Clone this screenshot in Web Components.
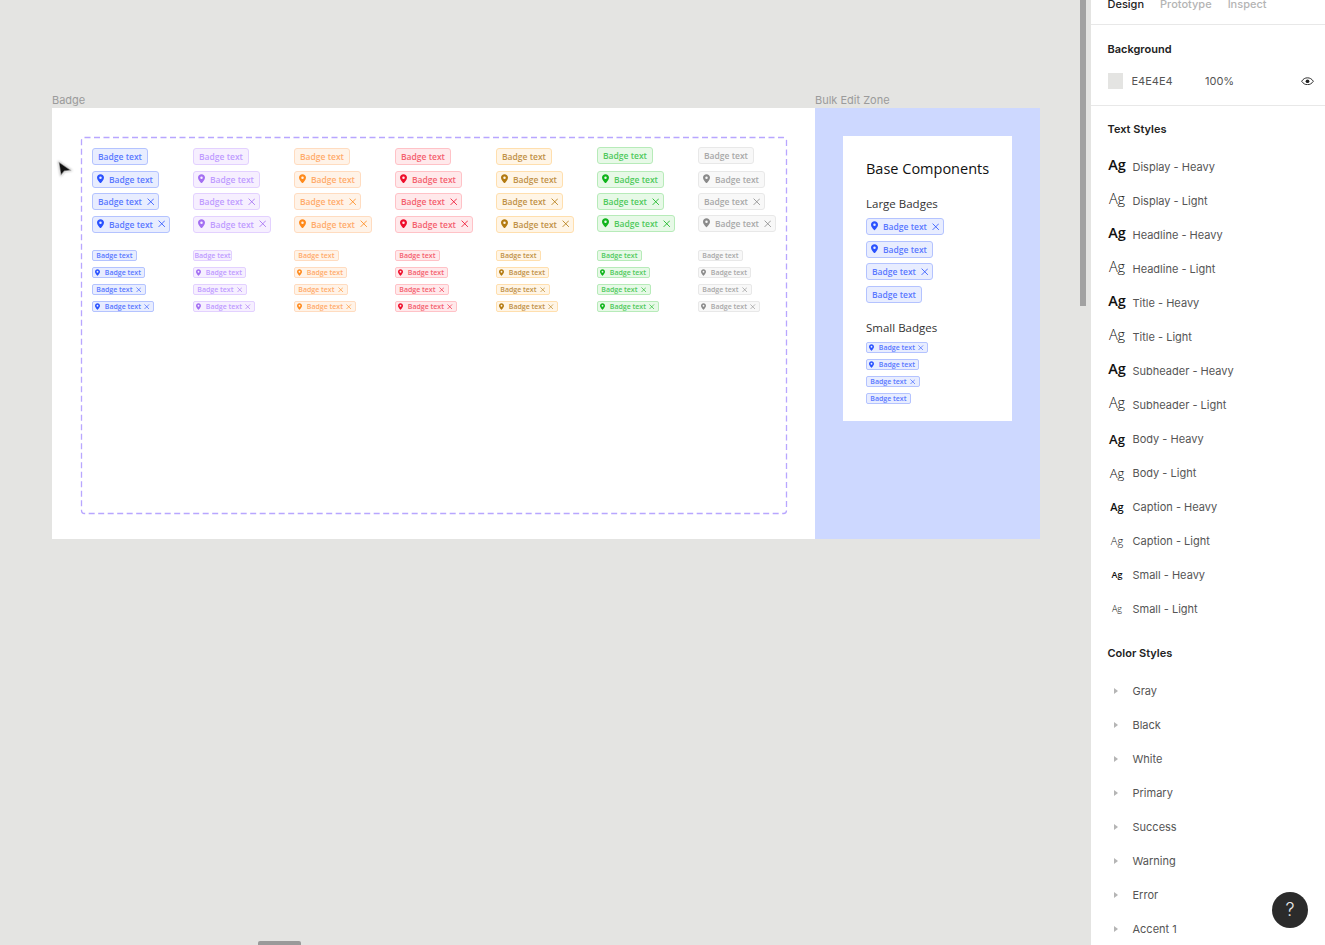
<!DOCTYPE html>
<html lang="en">
<head>
<meta charset="utf-8">
<title>Badge</title>
<style>
html,body{margin:0;padding:0;height:100%;overflow:hidden;background:#e4e4e2;font-family:Inter,"Liberation Sans",sans-serif}
</style>
</head>
<body>
<x-editor>
  <x-frame label="Badge" width="763" tone="white">
    <x-component-set></x-component-set>
  </x-frame>
  <x-frame label="Bulk Edit Zone" width="225" tone="blue">
    <x-base-card></x-base-card>
  </x-frame>
  <x-panel slot="panel"></x-panel>
</x-editor>
<script>
const TONES={
  blue:{bg:'#e8edff',bd:'#b4c3ff',tx:'#5a78ff',ic:'#2a52ff'},
  purple:{bg:'#f6efff',bd:'#e3d1ff',tx:'#c09cff',ic:'#a36ef2'},
  orange:{bg:'#fff3e8',bd:'#ffdcc0',tx:'#ffab6b',ic:'#ff8a1c'},
  red:{bg:'#ffe9eb',bd:'#ffc2c7',tx:'#f4606e',ic:'#ee0f2c'},
  yellow:{bg:'#fff5e6',bd:'#ffdfae',tx:'#bf9146',ic:'#b37a10'},
  green:{bg:'#e7f9e7',bd:'#b7ebb9',tx:'#4fc95c',ic:'#10b41c'},
  gray:{bg:'#f8f8f8',bd:'#e8e8e8',tx:'#a8a8a8',ic:'#8a8a8a'}
};
const PIN='<svg class="pin" viewBox="0 0 10 13" aria-hidden="true"><path fill="currentColor" fill-rule="evenodd" d="M5 0C2.2 0 0 2.2 0 4.9 0 8.300 5 13 5 13s5-4.700 5-8.100C10 2.200 7.800 0 5 0zm0 3.200a1.800 1.800 0 1 1 0 3.600 1.800 1.800 0 0 1 0-3.600z"/></svg>';
const CROSS='<svg class="cross" viewBox="0 0 10 10" aria-hidden="true"><path fill="none" stroke="currentColor" stroke-width="1.100" d="M.8.8l8.400 8.400M9.200.8L.8 9.200"/></svg>';

class XBadge extends HTMLElement{
  connectedCallback(){
    if(this.shadowRoot)return;
    const t=TONES[this.getAttribute('tone')||'blue'];
    const r=this.attachShadow({mode:'open'});
    r.innerHTML=`<style>
      :host{display:inline-flex;box-sizing:border-box;align-items:center;height:17px;padding:0 5px;border:1px solid ${t.bd};border-radius:3px;background:${t.bg};color:${t.tx};font:600 8.500px/15px "Open Sans","Noto Sans",sans-serif;white-space:nowrap;flex:none}
      :host([leading]){padding-left:3.700px}
      :host([trailing]){padding-right:3.500px}
      :host([up]){margin-top:-.7px;margin-bottom:.7px}
      .pin{width:7px;height:9.500px;margin:0 5.300px 1px 0;color:${t.ic};flex:none}
      .cross{width:7.500px;height:7.500px;margin-left:5px;color:${t.ic};flex:none}
      :host([size=small]){height:11px;padding:0 3.300px;border-radius:2px;font-size:7px;line-height:9px}
      :host([size=small][leading]){padding-left:1.800px}
      :host([size=small][trailing]){padding-right:3.500px}
      :host([size=small][tight]){padding:0 .4px}
      :host([size=small]) .pin{width:5px;height:7px;margin:0 5px 1px 0}
      :host([size=small]) .cross{width:5.500px;height:5.500px;margin-left:3.200px}
    </style>${this.hasAttribute('leading')?PIN:''}<slot></slot>${this.hasAttribute('trailing')?CROSS:''}`;
  }
}
customElements.define('x-badge',XBadge);

class XToneColumn extends HTMLElement{
  connectedCallback(){
    if(this.shadowRoot)return;
    const tone=this.getAttribute('tone');
    const up=this.hasAttribute('shift');
    const tight=this.hasAttribute('tight');
    const large=[['',up],['leading',false],['trailing',false],['leading trailing',up]];
    const small=['','leading','trailing','leading trailing'];
    const r=this.attachShadow({mode:'open'});
    r.innerHTML=`<style>
      :host{display:flex;flex-direction:column;align-items:flex-start;gap:17.500px}
      .g{display:flex;flex-direction:column;align-items:flex-start}
      .l{gap:5.500px}.s{gap:6px}
    </style>
    <div class="g l">${large.map(([a,u])=>`<x-badge tone="${tone}" ${a} ${u?'up':''}>Badge text</x-badge>`).join('')}</div>
    <div class="g s">${small.map((a,i)=>`<x-badge tone="${tone}" size="small" ${a} ${tight&&i===0?'tight':''}>Badge text</x-badge>`).join('')}</div>`;
  }
}
customElements.define('x-tone-column',XToneColumn);

class XComponentSet extends HTMLElement{
  constructor(){
    super();
    const r=this.attachShadow({mode:'open'});
    r.innerHTML=`<style>
      :host{display:grid;position:relative;grid-template-columns:repeat(7,101px);align-content:start;box-sizing:border-box;margin:29px 28px 25px 29px;height:377px;padding:11px 0 0 11px}
      svg{position:absolute;left:0;top:0;width:706px;height:377px;overflow:visible;pointer-events:none}
    </style>
    <svg viewBox="0 0 706 377" aria-hidden="true"><rect x=".5" y=".5" width="705" height="376" rx="3" fill="none" stroke="#b8a6ff" stroke-width="1.300" stroke-dasharray="6 3.500"/></svg>
    <x-tone-column tone="blue"></x-tone-column>
    <x-tone-column tone="purple" tight></x-tone-column>
    <x-tone-column tone="orange"></x-tone-column>
    <x-tone-column tone="red"></x-tone-column>
    <x-tone-column tone="yellow"></x-tone-column>
    <x-tone-column tone="green" shift></x-tone-column>
    <x-tone-column tone="gray" shift></x-tone-column>`;
  }
}
customElements.define('x-component-set',XComponentSet);

class XBaseCard extends HTMLElement{
  constructor(){
    super();
    const r=this.attachShadow({mode:'open'});
    r.innerHTML=`<style>
      :host{display:flex;flex-direction:column;align-items:flex-start;box-sizing:border-box;width:169px;height:285px;margin:28px 0 0 28px;padding:23px 0 0 23px;background:#fff;font-family:"Open Sans","Noto Sans",sans-serif}
      h2{margin:0 0 16.500px;font:500 14.500px/20px "Open Sans","Noto Sans",sans-serif;color:#111}
      h3{margin:0 0 6.500px;font:400 11.500px/16px "Open Sans","Noto Sans",sans-serif;color:#333}
      .g{display:flex;flex-direction:column;align-items:flex-start}
      .l{gap:5.500px;margin-bottom:17.500px}.s{gap:6px;margin-top:-.5px}
    </style>
    <h2>Base Components</h2>
    <h3>Large Badges</h3>
    <div class="g l">
      <x-badge leading trailing>Badge text</x-badge>
      <x-badge leading>Badge text</x-badge>
      <x-badge trailing>Badge text</x-badge>
      <x-badge>Badge text</x-badge>
    </div>
    <h3>Small Badges</h3>
    <div class="g s">
      <x-badge size="small" leading trailing>Badge text</x-badge>
      <x-badge size="small" leading>Badge text</x-badge>
      <x-badge size="small" trailing>Badge text</x-badge>
      <x-badge size="small">Badge text</x-badge>
    </div>`;
  }
}
customElements.define('x-base-card',XBaseCard);

class XFrame extends HTMLElement{
  constructor(){
    super();
    const r=this.attachShadow({mode:'open'});
    r.innerHTML=`<style>
      :host{display:block;flex:none}
      .label{height:16px;font:400 11px/16px Inter,sans-serif;color:#9b9b9b;white-space:nowrap}
      .body{display:flow-root;height:431px;overflow:hidden}
    </style><div class="label"></div><div class="body"><slot></slot></div>`;
  }
  connectedCallback(){
    this.style.width=this.getAttribute('width')+'px';
    this.shadowRoot.querySelector('.label').textContent=this.getAttribute('label');
    this.shadowRoot.querySelector('.body').style.background=this.getAttribute('tone')==='blue'?'#cdd8ff':'#fff';
  }
}
customElements.define('x-frame',XFrame);

class XTextStyle extends HTMLElement{
  constructor(){
    super();
    const r=this.attachShadow({mode:'open'});
    r.innerHTML=`<style>
      :host{display:flex;align-items:center;height:34px;font:400 11px/16px Inter,sans-serif;color:#555}
      .ag{flex:none;width:19px;margin-right:6px;text-align:center;color:#111;font-family:"Open Sans","Noto Sans",sans-serif;line-height:16px}
    </style><span class="ag">Ag</span><slot></slot>`;
  }
  connectedCallback(){
    const a=this.shadowRoot.querySelector('.ag');
    a.style.fontSize=this.getAttribute('ag')+'px';
    a.style.fontWeight=this.hasAttribute('heavy')?'600':'300';
    a.style.marginBottom=this.getAttribute('lift')+'px';
  }
}
customElements.define('x-text-style',XTextStyle);

class XColorStyle extends HTMLElement{
  constructor(){
    super();
    const r=this.attachShadow({mode:'open'});
    r.innerHTML=`<style>
      :host{display:flex;align-items:center;height:34px;font:400 11px/16px Inter,sans-serif;color:#555}
      svg{flex:none;width:4px;height:6px;margin:0 14.500px 0 6.500px}
    </style><svg viewBox="0 0 4 6" aria-hidden="true"><path d="M0 0l4 3-4 3z" fill="#b5b5b5"/></svg><slot></slot>`;
  }
}
customElements.define('x-color-style',XColorStyle);

class XPanel extends HTMLElement{
  constructor(){
    super();
    const texts=[['Display - Heavy',14.5,1,4],['Display - Light',14.5,0,4],['Headline - Heavy',14.5,1,4],['Headline - Light',14.5,0,4],['Title - Heavy',14.5,1,4],['Title - Light',14.5,0,4],['Subheader - Heavy',14.5,1,4],['Subheader - Light',14.5,0,4],['Body - Heavy',13,1,0],['Body - Light',13,0,0],['Caption - Heavy',11,1,0],['Caption - Light',11,0,0],['Small - Heavy',9,1,0],['Small - Light',9,0,0]];
    const colors=['Gray','Black','White','Primary','Success','Warning','Error','Accent 1'];
    const r=this.attachShadow({mode:'open'});
    r.innerHTML=`<style>
      :host{display:block;height:100%;overflow:hidden;background:#fff;font:400 11px/16px Inter,sans-serif;color:#222}
      .tabs{display:flex;gap:16px;box-sizing:border-box;height:29px;margin-top:-4px;padding:0 16.500px;border-bottom:1px solid #e8e8e8;font-weight:500;color:#b4b4b4}
      .tabs b{font-weight:500;color:#222}
      section{padding:16px 16.500px;border-bottom:1px solid #e8e8e8}
      section:last-child{border:0}
      h4{margin:0;font:600 11px/16px Inter,sans-serif;color:#222}
      .bg{display:flex;align-items:center;margin-top:16px;color:#555}
      .sw{width:15.500px;height:15.500px;background:#e4e4e2;margin-right:8.500px}
      .hex{width:73.500px}
      .eye{margin-left:auto;width:13px;height:8.500px;margin-right:-5px}
      .list{margin-top:13px}
      .a{padding-top:15px;padding-bottom:19px;border:0}
      .b{padding-top:0}
    </style>
    <div class="tabs"><b>Design</b><span>Prototype</span><span>Inspect</span></div>
    <section>
      <h4>Background</h4>
      <div class="bg"><span class="sw"></span><span class="hex">E4E4E4</span><span>100%</span>
        <svg class="eye" viewBox="0 0 14 9" aria-hidden="true"><path fill="none" stroke="#222" d="M.7 4.500C2.300 2 4.500.8 7 .8s4.700 1.200 6.300 3.700C11.700 7 9.500 8.200 7 8.200S2.300 7 .7 4.500z"/><circle cx="7" cy="4.500" r="2" fill="#222"/></svg>
      </div>
    </section>
    <section class="a">
      <h4>Text Styles</h4>
      <div class="list">${texts.map(([t,s,h,l])=>`<x-text-style ag="${s}" lift="${l}" ${h?'heavy':''}>${t}</x-text-style>`).join('')}</div>
    </section>
    <section class="b">
      <h4>Color Styles</h4>
      <div class="list">${colors.map(c=>`<x-color-style>${c}</x-color-style>`).join('')}</div>
    </section>`;
  }
}
customElements.define('x-panel',XPanel);

class XEditor extends HTMLElement{
  constructor(){
    super();
    const r=this.attachShadow({mode:'open'});
    r.innerHTML=`<style>
      :host{display:flex;position:relative;width:1325px;height:945px;overflow:hidden;background:#e4e4e2}
      .canvas{flex:1;min-width:0;display:flex;align-items:flex-start;padding:92px 0 0 52px}
      .side{flex:none;width:234px;height:100%}
      .vbar{position:absolute;left:1079.500px;top:0;width:6px;height:306px;background:#a2a2a2}
      .hbar{position:absolute;left:258px;top:941px;width:43px;height:4px;background:#9a9a9a;border-radius:2px 2px 0 0}
      .cursor{position:absolute;left:57px;top:160px;width:16px;height:18px;filter:drop-shadow(0 0 1px rgba(0,0,0,.35))}
      .help{position:absolute;left:1272px;top:892px;width:36px;height:36px;border-radius:50%;background:#2b2b2b;color:#e8e8e8;display:flex;align-items:center;justify-content:center;font:300 18px/1 Inter,sans-serif}
    </style>
    <div class="canvas"><slot></slot></div>
    <div class="side"><slot name="panel"></slot></div>
    <div class="vbar"></div><div class="hbar"></div>
    <svg class="cursor" viewBox="0 0 16 18" aria-hidden="true"><path d="M1.500 1.500l2.300 14.300 3.700-4.600 7.200-.6z" fill="#111" stroke="#fff" stroke-opacity=".55" stroke-width="1.500" stroke-linejoin="round"/></svg>
    <div class="help">?</div>`;
  }
}
customElements.define('x-editor',XEditor);
</script>
</body>
</html>
